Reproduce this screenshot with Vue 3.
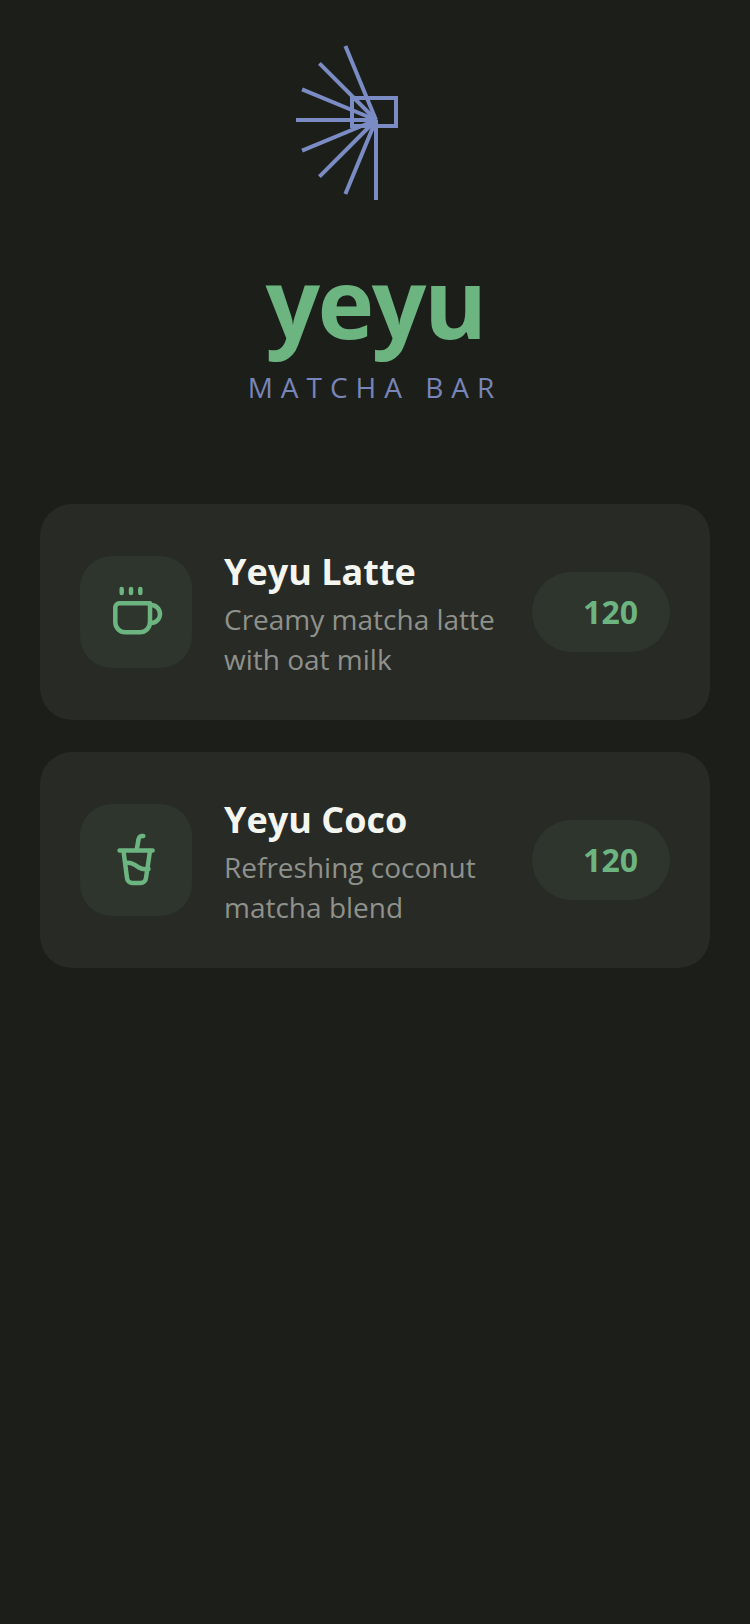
<template>
  <div class="page">
    <header class="brand">
      <svg class="mark" width="160" height="160" viewBox="0 0 160 160" fill="none" stroke="#7b8cc4" stroke-width="4">
        <line v-for="(ray, i) in rays" :key="i" x1="81" y1="80" :x2="ray.x" :y2="ray.y" />
        <rect x="57" y="58" width="44" height="28" />
      </svg>
      <h1 class="name">yeyu</h1>
      <p class="tagline">MATCHA BAR</p>
    </header>

    <section class="menu">
      <article v-for="item in items" :key="item.name" class="card">
        <div class="icon-box">
          <svg v-if="item.icon === 'cup'" width="56" height="56" viewBox="0 0 56 56" fill="none" stroke="#6cb480" stroke-width="4.5" stroke-linecap="round" stroke-linejoin="round">
            <path d="M7.300 23.300a4 4 0 0 1 4-4h30.700v19a10 10 0 0 1-10 10H17.300a10 10 0 0 1-10-10z" />
            <path d="M42 21h1a9 9 0 0 1 0 18h-1" />
            <path d="M13.700 5v4M23 5v4M32.300 5v4" />
          </svg>
          <svg v-else width="56" height="56" viewBox="0 0 56 56" fill="none" stroke="#6cb480" stroke-width="4.5" stroke-linecap="round" stroke-linejoin="round">
            <path d="M11.600 18.500h33" />
            <path d="M15.500 19l3.500 27a5.500 5.500 0 0 0 5.500 5h8a5.500 5.500 0 0 0 5.500-5l4-27" />
            <path d="M18 31c5-1.500 9 2 13 4.500s7 1.500 9.500 1.500" />
            <path d="M28.700 18l1.800-10.500a4 4 0 0 1 4.800-3.500" />
          </svg>
        </div>
        <div class="info">
          <h2 class="title">{{ item.name }}</h2>
          <p class="desc">{{ item.desc }}</p>
        </div>
        <div class="price">{{ item.price }}</div>
      </article>
    </section>
  </div>
</template>

<script setup>
const angles = [-157.5, -135, -112.5, -90, -67.5, -45, -22.5, 0]
const rays = angles.map((a) => {
  const r = (a * Math.PI) / 180
  return { x: 81 + 80 * Math.sin(r), y: 80 + 80 * Math.cos(r) }
})

const items = [
  { name: 'Yeyu Latte', desc: 'Creamy matcha latte with oat milk', price: 120, icon: 'cup' },
  { name: 'Yeyu Coco', desc: 'Refreshing coconut matcha blend', price: 120, icon: 'coco' }
]
</script>

<style>
html,
body {
  margin: 0;
  background: #1c1e1a;
}
</style>

<style scoped>
.page {
  min-height: 1624px;
  background: #1c1e1a;
  font-family: "Open Sans", sans-serif;
  box-sizing: border-box;
  padding: 40px 40px 0;
}

.brand {
  display: flex;
  flex-direction: column;
  align-items: center;
  margin-bottom: 97px;
}

.mark {
  display: block;
  margin-bottom: 36px;
}

.name {
  margin: 0;
  font-size: 96px;
  line-height: 131px;
  font-weight: 700;
  letter-spacing: -2.5px;
  color: #6cb480;
}

.tagline {
  margin: 0;
  font-size: 28px;
  line-height: 40px;
  letter-spacing: 8px;
  color: #7885b8;
}

.menu {
  display: flex;
  flex-direction: column;
  gap: 32px;
}

.card {
  display: flex;
  align-items: center;
  gap: 32px;
  padding: 40px;
  border-radius: 32px;
  background: #282a26;
}

.icon-box {
  flex: none;
  width: 112px;
  height: 112px;
  border-radius: 32px;
  background: #2e352d;
  display: flex;
  align-items: center;
  justify-content: center;
}

.info {
  flex: 1;
  min-width: 0;
  padding: 1px 0;
}

.title {
  margin: 0;
  font-size: 36px;
  line-height: 54px;
  font-weight: 700;
  color: #f5f5f0;
}

.desc {
  margin: 0;
  font-size: 28px;
  line-height: 40px;
  color: #8f918b;
}

.price {
  flex: none;
  box-sizing: border-box;
  width: 138px;
  height: 80px;
  padding: 0 32px 2px;
  border-radius: 40px;
  background: #2e352d;
  display: flex;
  align-items: center;
  justify-content: flex-end;
  font-size: 32px;
  font-weight: 700;
  color: #6cb480;
}
</style>
